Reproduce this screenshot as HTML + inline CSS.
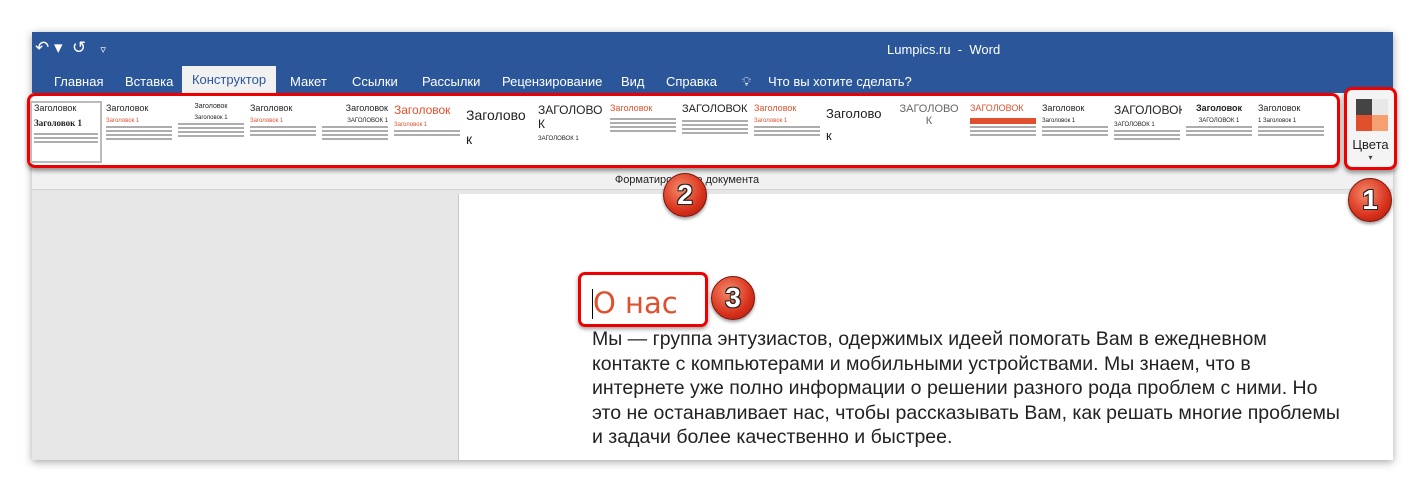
<!DOCTYPE html>
<html><head><meta charset="utf-8"><style>
*{margin:0;padding:0;box-sizing:border-box}
body{width:1425px;height:491px;background:#fff;position:relative;overflow:hidden;font-family:"Liberation Sans","DejaVu Sans",sans-serif}
.win{position:absolute;left:32px;top:32px;width:1361px;height:428px;background:#e6e6e6;box-shadow:0 2px 8px rgba(0,0,0,.35)}
.title{position:absolute;left:0;top:0;width:1361px;height:61px;background:#2b579a;color:#fff}
.tabs span{position:absolute;top:42px;font-size:13px;color:#fff}
.tab-act{position:absolute;left:150px;top:34px;width:94px;height:27px;background:#f1f1f1;color:#2b579a;font-size:13px;text-align:center;line-height:28px}
.ribbon{position:absolute;left:0;top:61px;width:1361px;height:97px;background:#f1f1f1;border-bottom:1px solid #d4d4d4}
.gal{position:absolute;left:-5px;top:0;width:1313px;height:75px;border:3px solid #e00;border-radius:8px;box-shadow:0 3px 4px rgba(0,0,0,.4);background:#fff}
.th{position:absolute;top:7px;width:70px;height:58px;overflow:hidden;font-size:6px;color:#222;padding:0 2px}
.th b{display:block;font-weight:normal;font-size:9px;margin-bottom:5px}
.th i{display:block;height:2px;background:#777;margin:2px 0;opacity:.6;font-style:normal}
.th .r{color:#e0502d}
.doc{position:absolute;left:426px;top:162px;width:935px;height:266px;background:#fff;border-left:1px solid #c8c8c8}
.badge{position:absolute;width:44px;height:44px;border-radius:50%;background:radial-gradient(circle at 40% 35%,#f58a6a,#d8311c 60%,#a21a0c);border:1px solid #7a1508;color:#fff;font:bold 28px/42px "Liberation Sans",sans-serif;text-align:center;text-shadow:-1px -1px 0 #222,1px -1px 0 #222,-1px 1px 0 #222,1px 1px 0 #222;box-shadow:0 2px 3px rgba(0,0,0,.4)}
.body{position:absolute;left:592px;top:327px;font-size:19.5px;line-height:24.5px;color:#222;width:800px;white-space:nowrap}
</style></head><body>
<div class="win">
 <div class="title">
  <div style="position:absolute;left:3px;top:6px;font-size:17px">↶ ▾ &nbsp;↺ &nbsp;&nbsp;<span style="font-size:11px">▿</span></div>
  <div style="position:absolute;left:855px;top:10px;font-size:13px">Lumpics.ru &nbsp;- &nbsp;Word</div>
  <div class="tabs">
   <span style="left:22px">Главная</span><span style="left:93px">Вставка</span>
   <span style="left:258px">Макет</span><span style="left:320px">Ссылки</span><span style="left:390px">Рассылки</span>
   <span style="left:470px">Рецензирование</span><span style="left:589px">Вид</span><span style="left:634px">Справка</span>
   <span style="left:710px">💡&#xFE0E;</span><span style="left:736px">Что вы хотите сделать?</span>
  </div>
  <div class="tab-act">Конструктор</div>
 </div>
 <div class="ribbon">
  <div class="gal">
   <div class="th" style="left:2px;background:#fff;outline:2px solid #bbb;width:68px"><b>Заголовок</b><b style="font-weight:bold;font-family:'Liberation Serif'">Заголовок 1</b><i></i><i></i><i></i></div>
   <div class="th" style="left:74px"><b>Заголовок</b><span class="r">Заголовок 1</span><i></i><i></i><i></i><i></i></div>
   <div class="th" style="left:146px;text-align:center"><b style="font-size:7px">Заголовок</b>Заголовок 1<i></i><i></i><i></i><i></i></div>
   <div class="th" style="left:218px"><b>Заголовок</b><span class="r">Заголовок 1</span><i></i><i></i><i></i></div>
   <div class="th" style="left:290px;text-align:right"><b>Заголовок</b>ЗАГОЛОВОК 1<i></i><i></i><i></i><i></i></div>
   <div class="th" style="left:362px"><b class="r" style="font-size:12px">Заголовок</b><span class="r">Заголовок 1</span><i></i><i></i></div>
   <div class="th" style="left:434px;width:72px"><b style="font-size:14px;line-height:24px;white-space:normal;width:66px">Заголово к</b></div>
   <div class="th" style="left:506px"><b style="font-size:12px;width:60px">ЗАГОЛОВО К</b>ЗАГОЛОВОК 1</div>
   <div class="th" style="left:578px"><b class="r">Заголовок</b><i></i><i></i><i></i><i></i></div>
   <div class="th" style="left:650px"><b style="font-size:11px">ЗАГОЛОВОК</b><i></i><i></i><i></i><i></i></div>
   <div class="th" style="left:722px"><b class="r">Заголовок</b><span class="r">Заголовок 1</span><i></i><i></i><i></i></div>
   <div class="th" style="left:794px"><b style="font-size:13px;line-height:22px;width:62px">Заголово к</b></div>
   <div class="th" style="left:866px;text-align:center;color:#666"><b style="font-size:11px;width:62px">ЗАГОЛОВО К</b></div>
   <div class="th" style="left:938px"><b class="r">ЗАГОЛОВОК</b><div style="height:6px;background:#e0502d"></div><i></i><i></i><i></i></div>
   <div class="th" style="left:1010px"><b>Заголовок</b>Заголовок 1<i></i><i></i><i></i></div>
   <div class="th" style="left:1082px"><b style="font-size:12px">ЗАГОЛОВОК</b>ЗАГОЛОВОК 1<i></i><i></i><i></i></div>
   <div class="th" style="left:1154px;text-align:center"><b style="font-weight:bold">Заголовок</b>ЗАГОЛОВОК 1<i></i><i></i><i></i></div>
   <div class="th" style="left:1226px"><b>Заголовок</b>1 Заголовок 1<i></i><i></i><i></i></div>
  </div>
  <div style="position:absolute;left:1312px;top:-6px;width:53px;height:83px;border:3px solid #e00;border-radius:8px;background:#f4f4f4;box-shadow:0 3px 4px rgba(0,0,0,.4)">
   <div style="position:absolute;left:9px;top:9px;width:32px;height:32px;display:grid;grid-template-columns:1fr 1fr">
    <div style="background:#444"></div><div style="background:#e8e8e8"></div><div style="background:#e0502d"></div><div style="background:#f5a070"></div></div>
   <div style="position:absolute;left:0;width:47px;top:47px;text-align:center;font-size:13px;color:#222">Цвета</div>
   <div style="position:absolute;left:0;width:47px;top:63px;text-align:center;font-size:8px;color:#444">▾</div>
  </div>
  <div style="position:absolute;left:0;width:1310px;top:81px;text-align:center;font-size:11px;color:#222">Форматирование документа</div>
 </div>
 <div class="doc"></div>
</div>
<div style="position:absolute;left:578px;top:272px;width:130px;height:55px;border:3px solid #e00;border-radius:7px;box-shadow:0 2px 4px rgba(0,0,0,.4)"></div>
<div style="position:absolute;left:592px;top:289px;width:1px;height:30px;background:#000"></div>
<div style="position:absolute;left:593px;top:286px;font-size:29px;color:#e0502d;font-family:'DejaVu Sans',sans-serif">О нас</div>
<div class="body">Мы — группа энтузиастов, одержимых идеей помогать Вам в ежедневном<br>контакте с компьютерами и мобильными устройствами. Мы знаем, что в<br>интернете уже полно информации о решении разного рода проблем с ними. Но<br>это не останавливает нас, чтобы рассказывать Вам, как решать многие проблемы<br>и задачи более качественно и быстрее.</div>
<div class="badge" style="left:1348px;top:178px">1</div>
<div class="badge" style="left:663px;top:173px">2</div>
<div class="badge" style="left:711px;top:276px">3</div>
</body></html>
